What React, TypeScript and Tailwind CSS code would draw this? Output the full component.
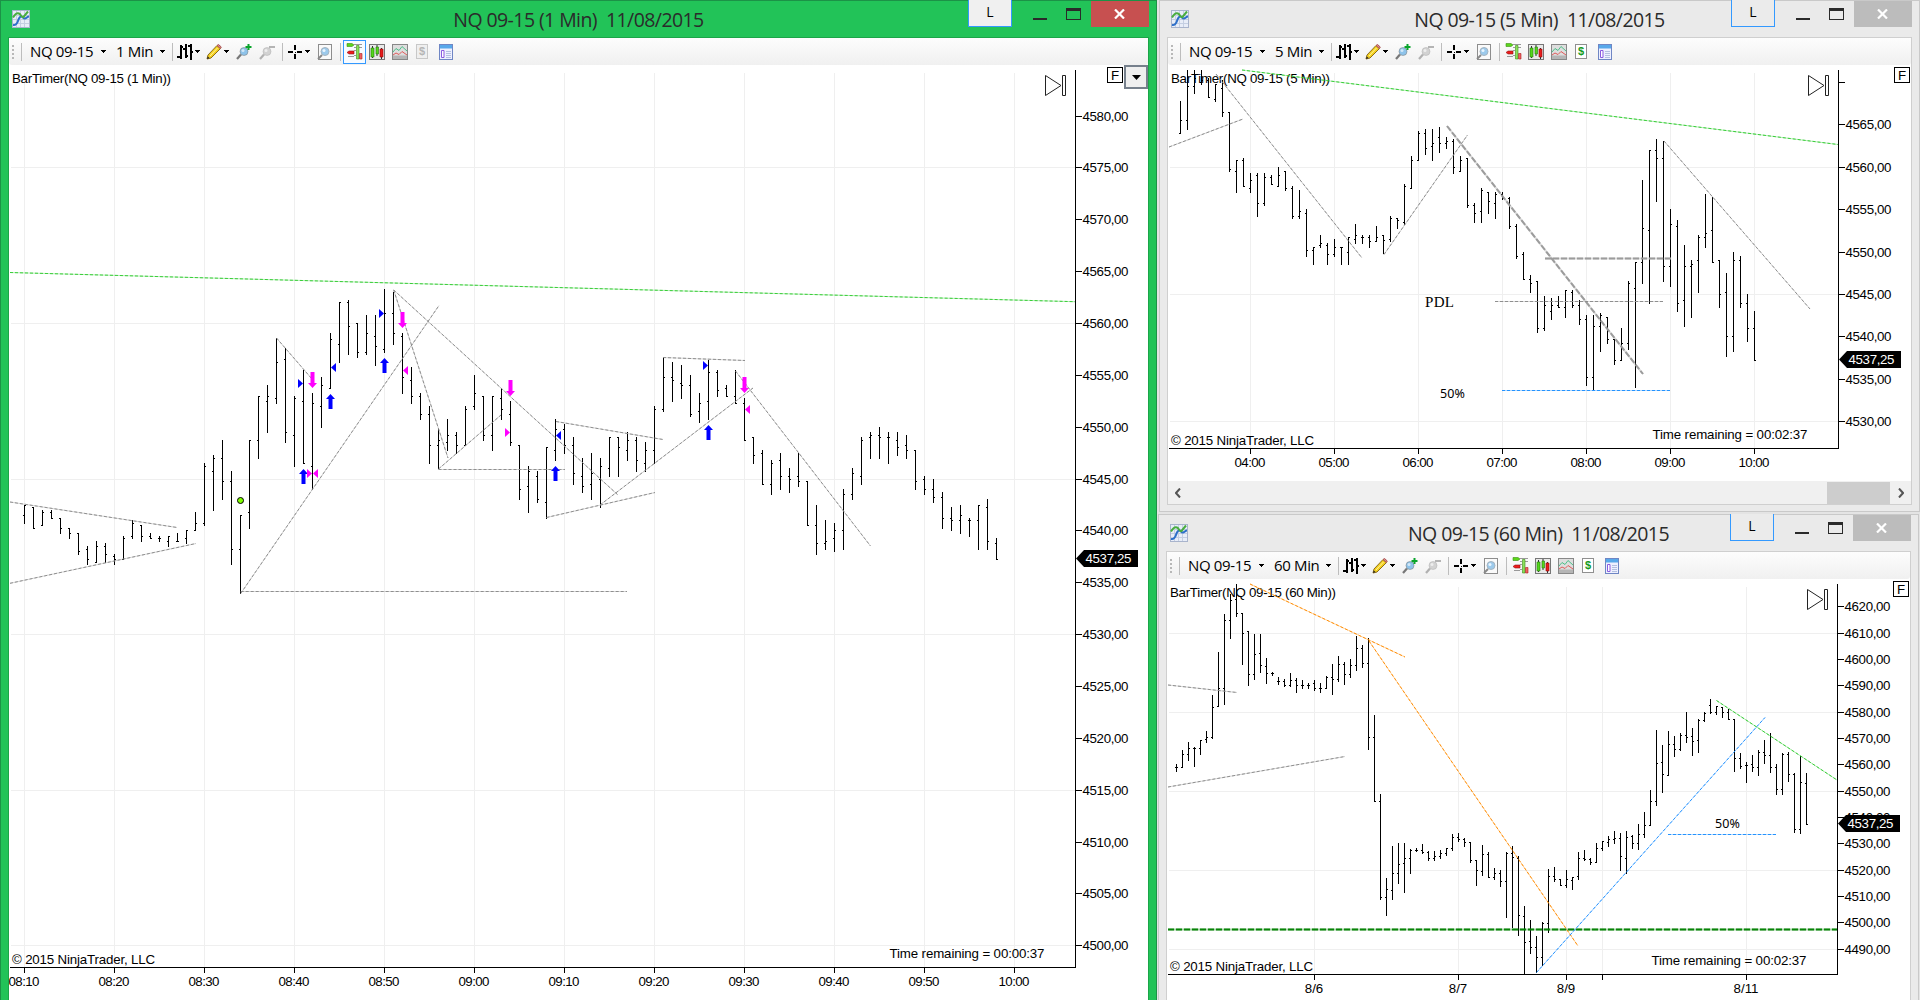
import type { ReactNode } from 'react';
import clsx from 'clsx';

type Bar = [number, number, number, number];
type Line = { from: [number, number]; to: [number, number]; color?: string; dash?: string; width?: number };
type Label = { at: number; text: string };

type ChartProps = {
  view: [number, number, number, number];
  title: string;
  titleWidth: number;
  remaining: string;
  remainingY: number;
  axisX: number;
  axisY: number;
  prices: Label[];
  times: Label[];
  gridY: number[];
  firstBar: number;
  barStep: number;
  bars: Bar[];
  barBase: number;
  lines: Line[];
  priceY: number;
  children?: ReactNode;
};

const GRAY = '#8c8c8c';
const LIME = '#32cd32';
const ORANGE = '#ff8c00';
const BLUE = '#1e90ff';

// open, high, low, close as offsets in thirds of a pixel
const bars1: Bar[] = [
  [767, 735, 792, 736], [742, 741, 806, 805], [796, 750, 797, 757], [757, 750, 776, 775],
  [776, 775, 822, 805], [806, 805, 837, 821], [821, 820, 885, 874], [869, 858, 914, 899],
  [907, 843, 908, 859], [859, 850, 908, 883], [890, 882, 914, 899], [898, 828, 899, 835],
  [830, 781, 836, 790], [797, 796, 846, 829], [829, 820, 837, 835], [835, 828, 846, 835],
  [844, 828, 861, 830], [845, 820, 846, 844], [835, 811, 852, 811], [811, 757, 812, 790],
  [790, 609, 797, 619], [634, 585, 753, 595], [595, 540, 720, 664], [664, 633, 914, 868],
  [868, 766, 1002, 767], [757, 541, 806, 542], [542, 408, 597, 409], [424, 375, 518, 409],
  [415, 234, 431, 307], [298, 265, 549, 517], [526, 408, 621, 415], [424, 330, 612, 610],
  [619, 399, 690, 430], [439, 351, 503, 376], [385, 219, 386, 238], [253, 126, 308, 127],
  [127, 120, 285, 199], [190, 190, 293, 277], [277, 165, 285, 220], [229, 165, 318, 259],
  [268, 87, 278, 160], [160, 96, 254, 220], [229, 219, 402, 352], [361, 321, 431, 409],
  [409, 400, 480, 463], [463, 438, 612, 556], [556, 507, 627, 541], [547, 477, 573, 526],
  [526, 516, 582, 555], [555, 438, 558, 448], [439, 345, 449, 400], [409, 408, 543, 526],
  [526, 408, 573, 409], [415, 384, 480, 448], [463, 423, 558, 547], [556, 555, 720, 688],
  [679, 618, 759, 634], [649, 633, 729, 718], [727, 562, 776, 562], [571, 477, 603, 508],
  [508, 492, 582, 556], [556, 531, 674, 640], [649, 594, 699, 679], [673, 579, 720, 640],
  [658, 594, 744, 619], [625, 532, 651, 533], [533, 532, 651, 562], [571, 516, 603, 541],
  [541, 531, 636, 601], [610, 546, 635, 571], [571, 438, 612, 448], [448, 291, 456, 352],
  [352, 306, 426, 361], [370, 315, 417, 376], [376, 345, 471, 463], [454, 399, 489, 430],
  [424, 300, 480, 337], [337, 330, 411, 391], [385, 375, 411, 409], [409, 330, 432, 430],
  [430, 414, 543, 541], [532, 531, 612, 586], [580, 570, 675, 673], [673, 600, 705, 610],
  [601, 579, 690, 649], [649, 624, 699, 658], [649, 579, 681, 664], [664, 664, 798, 796],
  [796, 735, 885, 850], [850, 780, 870, 844], [835, 789, 876, 811], [811, 687, 870, 703],
  [703, 624, 720, 640], [649, 531, 675, 541], [532, 516, 597, 526], [526, 501, 597, 532],
  [532, 516, 612, 532], [541, 516, 588, 562], [556, 525, 597, 571], [571, 570, 690, 664],
  [658, 648, 705, 688], [688, 657, 729, 712], [712, 696, 807, 775], [775, 741, 813, 781],
  [781, 735, 822, 766], [781, 774, 831, 781], [781, 735, 870, 736], [742, 717, 870, 844],
  [850, 834, 900, 898],
];

const bars5: Bar[] = [
  [220, 123, 221, 181], [181, 30, 210, 79], [79, 30, 102, 54], [66, 30, 75, 60],
  [60, 54, 113, 112], [118, 71, 126, 72], [85, 60, 171, 157], [157, 156, 335, 328],
  [334, 300, 398, 301], [301, 294, 381, 379], [385, 339, 399, 361], [346, 339, 471, 430],
  [430, 339, 437, 352], [352, 345, 375, 373], [379, 321, 381, 346], [334, 333, 392, 385],
  [385, 378, 476, 469], [469, 390, 476, 454], [460, 447, 591, 571], [571, 561, 615, 562],
  [556, 525, 563, 550], [556, 549, 615, 583], [583, 537, 590, 562], [562, 562, 615, 562],
  [577, 531, 615, 532], [538, 492, 551, 526], [532, 525, 551, 532], [532, 525, 563, 544],
  [544, 498, 545, 532], [526, 525, 581, 541], [538, 468, 546, 475], [475, 475, 506, 481],
  [487, 372, 494, 379], [385, 288, 386, 301], [301, 213, 302, 220], [220, 207, 285, 265],
  [259, 207, 302, 250], [232, 201, 278, 250], [250, 231, 266, 244], [244, 238, 342, 322],
  [334, 288, 335, 301], [295, 294, 444, 436], [436, 429, 489, 460], [454, 384, 489, 391],
  [397, 396, 462, 424], [430, 396, 476, 403], [402, 396, 420, 415], [415, 411, 507, 499],
  [499, 492, 597, 589], [583, 576, 659, 658], [657, 645, 699, 670], [664, 663, 819, 805],
  [805, 708, 812, 736], [754, 714, 780, 736], [736, 708, 744, 742], [742, 690, 773, 691],
  [697, 690, 744, 736], [736, 720, 795, 778], [778, 765, 978, 952], [952, 765, 990, 799],
  [799, 759, 876, 766], [772, 771, 852, 838], [838, 837, 915, 901], [901, 804, 903, 850],
  [850, 663, 870, 670], [685, 606, 984, 607], [607, 360, 672, 505], [511, 270, 731, 271],
  [271, 237, 426, 295], [295, 243, 665, 619], [619, 447, 681, 493], [499, 480, 756, 730],
  [721, 555, 801, 619], [619, 600, 774, 613], [601, 525, 699, 532], [532, 402, 563, 520],
  [511, 411, 609, 607], [601, 600, 744, 703], [697, 639, 891, 829], [829, 576, 876, 601],
  [601, 588, 744, 730], [730, 702, 846, 805], [805, 753, 903, 901],
];

const bars60: Bar[] = [
  [592, 582, 606, 592], [592, 540, 593, 552], [552, 516, 573, 535], [536, 531, 591, 535],
  [535, 510, 555, 511], [508, 483, 518, 502], [502, 375, 506, 412], [409, 246, 410, 355],
  [355, 132, 405, 151], [151, 72, 207, 91], [88, 42, 140, 130], [130, 130, 285, 190],
  [184, 183, 348, 313], [313, 192, 330, 253], [250, 192, 308, 286], [290, 264, 341, 310],
  [310, 306, 318, 310], [334, 321, 345, 334], [334, 327, 350, 346], [346, 309, 351, 330],
  [331, 324, 369, 346], [346, 330, 357, 346], [346, 339, 356, 346], [340, 330, 363, 355],
  [355, 339, 369, 355], [355, 318, 357, 322], [322, 282, 375, 328], [328, 258, 335, 283],
  [283, 276, 345, 313], [313, 267, 323, 286], [286, 198, 303, 235], [235, 225, 293, 280],
  [280, 204, 540, 502], [502, 435, 696, 694], [694, 672, 990, 982], [982, 924, 1037, 958],
  [961, 828, 990, 910], [910, 819, 942, 883], [880, 819, 969, 865], [865, 837, 912, 841],
  [841, 834, 846, 841], [841, 822, 851, 847], [847, 844, 872, 865], [865, 843, 873, 859],
  [859, 840, 866, 850], [850, 834, 857, 835], [835, 792, 842, 802], [802, 789, 816, 808],
  [808, 804, 830, 817], [817, 816, 878, 871], [871, 870, 948, 901], [904, 825, 918, 853],
  [853, 847, 924, 922], [922, 894, 929, 910], [910, 900, 951, 934], [934, 846, 1044, 850],
  [850, 828, 1074, 862], [865, 858, 1098, 1036], [1039, 1008, 1212, 1117], [1114, 1050, 1152, 1132],
  [1132, 1098, 1208, 1162], [1162, 1056, 1188, 1060], [1060, 897, 1089, 919], [919, 891, 936, 928],
  [928, 928, 948, 946], [946, 900, 954, 928], [931, 921, 960, 922], [919, 846, 930, 865],
  [865, 840, 873, 868], [868, 865, 885, 877], [877, 819, 879, 835], [835, 813, 843, 814],
  [817, 798, 831, 808], [808, 783, 822, 805], [805, 789, 903, 859], [865, 783, 911, 802],
  [799, 795, 837, 820], [820, 762, 840, 793], [793, 726, 804, 766], [766, 660, 768, 694],
  [694, 480, 708, 580], [577, 525, 669, 613], [616, 483, 618, 523], [523, 498, 561, 538],
  [538, 489, 543, 496], [496, 426, 518, 502], [499, 474, 558, 514], [511, 447, 549, 451],
  [451, 426, 456, 430], [406, 387, 432, 427], [427, 408, 435, 409], [412, 411, 444, 427],
  [427, 417, 450, 448], [448, 447, 606, 565], [565, 549, 597, 589], [586, 576, 639, 586],
  [583, 555, 606, 592], [592, 540, 618, 547], [547, 510, 582, 556], [556, 489, 609, 592],
  [592, 582, 675, 658], [658, 549, 675, 553], [553, 546, 636, 613], [613, 609, 789, 778],
  [778, 558, 792, 637], [640, 609, 765, 763],
];

const lines1: Line[] = [
  { from: [10, 272.5], to: [1075, 301.7], color: LIME },
  { from: [10, 502], to: [177, 527.5] },
  { from: [10, 583.3], to: [196, 543.5] },
  { from: [276.5, 338], to: [312, 379] },
  { from: [240.7, 593.5], to: [439, 305.5] },
  { from: [240.7, 591.5], to: [627, 591.5] },
  { from: [393.7, 290], to: [448, 458] },
  { from: [393.7, 290], to: [618, 495] },
  { from: [438.5, 469], to: [501, 415] },
  { from: [438.5, 469.5], to: [565, 469.5] },
  { from: [556, 421.5], to: [663, 439.5] },
  { from: [546.5, 517.5], to: [655, 492.5] },
  { from: [600, 505], to: [753, 388] },
  { from: [663, 357.5], to: [745, 360.5] },
  { from: [735.5, 371], to: [870.5, 546] },
];

const lines5: Line[] = [
  { from: [1242, 70], to: [1838, 144.5], color: LIME },
  { from: [1169, 147], to: [1243, 119] },
  { from: [1216, 74], to: [1362, 258] },
  { from: [1384, 254.5], to: [1467.5, 135] },
  { from: [1447, 126], to: [1643, 374], color: '#999', width: 2, dash: '6 2' },
  { from: [1545, 258.5], to: [1671, 258.5], color: '#999', width: 2, dash: '6 2' },
  { from: [1495, 301.5], to: [1663, 301.5] },
  { from: [1664, 141], to: [1810, 309] },
  { from: [1502, 390.5], to: [1670, 390.5], color: BLUE },
];

const lines60: Line[] = [
  { from: [1168, 685], to: [1237, 692.5] },
  { from: [1168, 787], to: [1345, 756.5] },
  { from: [1250, 584], to: [1405, 657], color: ORANGE },
  { from: [1369, 641], to: [1578, 946], color: ORANGE },
  { from: [1168, 929.5], to: [1837, 929.5], color: '#008000', width: 2, dash: '6 2' },
  { from: [1536.5, 972.5], to: [1765, 717.5], color: BLUE },
  { from: [1668, 834.5], to: [1776, 834.5], color: BLUE },
  { from: [1716.5, 700.5], to: [1837, 780], color: LIME },
];

const priceLabels = (top: number, step: number, ys: number[]): Label[] =>
  ys.map((at, i) => ({ at, text: `${top - i * step},00` }));

const hourLabels = (first: number, step: number, texts: string[]): Label[] =>
  texts.map((text, i) => ({ at: first + i * step, text }));

const PlotText = ({ x, y, w, fill = '#000', children }: { x: number; y: number; w?: number; fill?: string; children: string }) => (
  <text x={x} y={y} textLength={w} fill={fill} className="font-['Liberation_Sans',sans-serif] text-[13.3px] whitespace-pre">
    {children}
  </text>
);

const Chart = (props: ChartProps) => {
  const { view, axisX, axisY, barBase } = props;
  const [left, top, width, height] = view;
  const gridTop = top + 8;
  const tagY = props.priceY;

  let path = '';
  props.bars.forEach(([o, h, l, c], i) => {
    const x = props.firstBar + i * props.barStep;
    const y1 = barBase + Math.round(h / 3);
    const y2 = Math.min(barBase + Math.round(l / 3), axisY);
    path += `M${x} ${y1}h1V${y2}h-1z`;
    path += `M${x - 1} ${barBase + Math.floor(o / 3)}h1v1h-1z`;
    path += `M${x + 1} ${barBase + Math.floor(c / 3)}h1v1h-1z`;
  });

  return (
    <svg width={width} height={height} viewBox={view.join(' ')} className="block shrink-0 bg-white">
      <g fill="#efefef" shapeRendering="crispEdges">
        {props.times.map((t) => (
          <rect key={t.at} x={t.at} y={gridTop} width={1} height={axisY - gridTop} />
        ))}
        {props.gridY.map((y) => (
          <rect key={y} x={left + 2} y={y} width={axisX - left - 2} height={1} />
        ))}
      </g>

      <PlotText x={left + 3} y={top + 18} w={props.titleWidth}>{props.title}</PlotText>
      <path d={path} fill="#000" shapeRendering="crispEdges" />

      {props.lines.map((line, i) => {
        const [x1, y1] = line.from;
        const [x2, y2] = line.to;
        const color = line.color ?? GRAY;
        return (
          <g key={i} stroke={color} strokeWidth={line.width ?? 1}>
            <line x1={x1} y1={y1} x2={x2} y2={y2} opacity={0.35} />
            <line x1={x1} y1={y1} x2={x2} y2={y2} strokeDasharray={line.dash ?? '3 2'} opacity={0.95} />
          </g>
        );
      })}

      {props.children}

      <g shapeRendering="crispEdges">
        <rect x={axisX} y={top + 5} width={1} height={axisY - top - 4} />
        <rect x={left + 1} y={axisY} width={axisX - left} height={1} />
        {props.prices.map((p) => (
          <rect key={p.at} x={axisX} y={p.at} width={7} height={1} />
        ))}
        {props.times.map((t) => (
          <rect key={t.at} x={t.at} y={axisY} width={1} height={6} />
        ))}
      </g>
      {props.prices.map((p) => (
        <PlotText key={p.at} x={axisX + 7.5} y={p.at + 5} w={p.text ? 46 : undefined}>{p.text}</PlotText>
      ))}
      {props.times.map((t) => (
        <text key={t.at} x={t.at} y={axisY + 19} textAnchor="middle" textLength={t.text.length === 5 ? 31 : undefined} className="font-['Liberation_Sans',sans-serif] text-[13.3px]">
          {t.text}
        </text>
      ))}

      <path d={`M${axisX + 1} ${tagY}l8-8.5h54v17h-54z`} />
      <PlotText x={axisX + 10.5} y={tagY + 4.5} w={46} fill="#fff">4537,25</PlotText>

      <PlotText x={left + 3} y={axisY - 3} w={143}>© 2015 NinjaTrader, LLC</PlotText>
      <PlotText x={axisX - 185.5} y={props.remainingY} w={155}>{`Time remaining = ${props.remaining}`}</PlotText>

      {/* go to last bar */}
      <path
        d={`M${axisX - 29.5} ${top + 10.5}v20l15.5-10zM${axisX - 12.5} ${top + 10.5}h3v20h-3z`}
        fill="#fff"
        stroke="#222"
      />
      <rect x={left + width - (left === 9 ? 40.5 : 16.5)} y={top + 2.5} width={15} height={15} fill="#fff" stroke="#000" />
      <PlotText x={left + width - (left === 9 ? 37 : 13)} y={top + 15}>F</PlotText>
    </svg>
  );
};

type MarkerProps = { x: number; y: number; color: string };

const UpArrow = ({ x, y, color }: MarkerProps) => (
  <path d={`M${x + 0.5} ${y}l4.5 5h-2.5v10h-4v-10h-2.5z`} fill={color} />
);
const DownArrow = ({ x, y, color }: MarkerProps) => (
  <path d={`M${x + 0.5} ${y + 16}l4.5-5h-2.5v-11h-4v11h-2.5z`} fill={color} />
);
const PointRight = ({ x, y, color }: MarkerProps) => <path d={`M${x} ${y}l-5-4.5v9z`} fill={color} />;
const PointLeft = ({ x, y, color }: MarkerProps) => <path d={`M${x} ${y}l5-4.5v9z`} fill={color} />;

const Trades = () => {
  const buy = '#0000ff';
  const sell = '#ff00ff';
  return (
    <g>
      <DownArrow x={312} y={372} color={sell} />
      <DownArrow x={402} y={312} color={sell} />
      <DownArrow x={510} y={380} color={sell} />
      <DownArrow x={744} y={377} color={sell} />
      <UpArrow x={303} y={469} color={buy} />
      <UpArrow x={330} y={394} color={buy} />
      <UpArrow x={384} y={358} color={buy} />
      <UpArrow x={555} y={466} color={buy} />
      <UpArrow x={708} y={425} color={buy} />
      <PointRight x={303} y={383.5} color={buy} />
      <PointRight x={384} y={313.5} color={buy} />
      <PointRight x={708} y={365.5} color={buy} />
      <PointRight x={312} y={473.5} color={sell} />
      <PointRight x={510} y={432.5} color={sell} />
      <PointLeft x={331} y={367.5} color={buy} />
      <PointLeft x={556} y={435.5} color={buy} />
      <PointLeft x={313} y={473.5} color={sell} />
      <PointLeft x={403} y={370.5} color={sell} />
      <PointLeft x={745} y={409.5} color={sell} />
      <circle cx={240.5} cy={500.5} r={3} fill="#7fff00" stroke="#000" />
    </g>
  );
};

const AppIcon = () => (
  <svg width="18" height="18" viewBox="0 0 18 18" className="mt-[10px] ml-[12px]">
    <rect x="0.5" y="0.5" width="17" height="17" fill="#e8edf8" stroke="#a9b4cc" />
    <path d="M4.5 1v16M8.5 1v16M12.5 1v16M1 5.5h16M1 9.5h16M1 13.5h16" stroke="#c5cfe2" />
    <path d="M1 15c3 .5 4-1 5-4s1.500-5 3.500-4.500S11 9 13 8.500s2-2 4-2" fill="none" stroke="#2d6fc9" strokeWidth="2" />
    <path d="M1 7.500c2-3.500 4-5 6-4 2 .8 2.500 4.500 4.500 3.500l4.500-5.500" fill="none" stroke="#49ad3f" strokeWidth="2" />
  </svg>
);

const Caret = ({ className }: { className: string }) => (
  <svg width="5" height="3" viewBox="0 0 5 3" className={clsx('shrink-0', className)} shapeRendering="crispEdges">
    <path d="M0 0h5L2.500 3z" />
  </svg>
);

const Separator = ({ className }: { className: string }) => (
  <span className={clsx('h-[18px] w-px shrink-0 bg-[#bdbdbd]', className)} />
);

const Lens = ({ tone, rim }: { tone: string; rim: string }) => (
  <>
    <path d="M5 10.500l-4 4.500" stroke={rim} strokeWidth="2.200" />
    <circle cx="8" cy="7.500" r="4" fill={tone} stroke={rim} strokeOpacity="0.5" />
    <circle cx="7" cy="6.500" r="1.500" fill="#fff" opacity="0.600" />
  </>
);

const Toolbar = ({ period, active }: { period: string; active?: boolean }) => (
  <div className="flex h-[27px] shrink-0 items-center overflow-hidden rounded-b-[3px] bg-linear-to-b from-[#fdfdfd] to-[#f0f0f0] font-['Open_Sans',sans-serif] text-[15px] tracking-[-0.35px] text-black">
    <svg width="2" height="14" viewBox="0 0 2 14" className="ml-[3px] shrink-0">
      <path d="M0 0h2v2H0zM0 4h2v2H0zM0 8h2v2H0zM0 12h2v2H0z" fill="#b8b8b8" />
    </svg>
    <Separator className="ml-[7px]" />
    <span className="ml-[8px] w-[64px] shrink-0 whitespace-nowrap">NQ 09-15</span>
    <Caret className="ml-[7px]" />
    <span className={clsx('ml-[10px] shrink-0 whitespace-nowrap', period.startsWith('60') ? 'w-[45px]' : 'w-[37px]')}>{period}</span>
    <Caret className="ml-[7px]" />
    <Separator className="ml-[7px]" />
    <svg width="16" height="16" viewBox="0 0 16 16" className="ml-[4px] shrink-0" shapeRendering="crispEdges">
      <path d="M3 1h2v14H3zM0 12h3v2H0zM5 2h1v2H5zM8 0h2v14H8zM6 4h2v2H6zM10 11h1v2h-1zM13 0h2v16h-2zM11 1h2v2h-2zM15 7h1v2h-1z" />
    </svg>
    <Caret className="ml-[2px]" />
    <svg width="16" height="16" viewBox="0 0 16 16" className="ml-[6px] shrink-0">
      <path d="M1 15l1-4L11 1.500l3.500 3L5 14z" fill="#f5d21f" stroke="#8a6b1c" />
      <path d="M11 1.500l1.500-1 2.800 2.500-1 1.500z" fill="#e28a8a" stroke="#a85454" />
      <path d="M4 12l7.500-8" stroke="#fff3a0" />
      <path d="M1 15l.8-2.500L3.500 14z" fill="#222" />
    </svg>
    <Caret className="ml-[2px]" />
    <svg width="16" height="16" viewBox="0 0 16 16" className="ml-[7px] shrink-0">
      <Lens tone="#8ec3ea" rim="#777" />
      <path d="M12.500 0v6M9.500 3h6" stroke="#0aa52c" strokeWidth="2" />
    </svg>
    <svg width="16" height="16" viewBox="0 0 16 16" className="ml-[7px] shrink-0">
      <Lens tone="#d2d2d2" rim="#b0b0b0" />
      <path d="M10 3h6" stroke="#b4b4b4" strokeWidth="2" />
    </svg>
    <Separator className="ml-[7px]" />
    <svg width="15" height="14" viewBox="0 0 15 14" className="ml-[5px] shrink-0" shapeRendering="crispEdges">
      <path d="M6 0h2v5H6zM6 9h2v5H6zM0 6h5v2H0zM9 6h5v2H9zM6.500 6.500h1v1h-1z" />
    </svg>
    <Caret className="ml-[2px]" />
    <svg width="16" height="16" viewBox="0 0 16 16" className="ml-[7px] shrink-0">
      <rect x="1.500" y="0.500" width="13" height="15" fill="#fafafa" stroke="#8d8d8d" />
      <path d="M5 11l-4 4" stroke="#888" strokeWidth="2" />
      <circle cx="8" cy="7.500" r="4" fill="#9ccaec" stroke="#a5b4c0" />
      <circle cx="7" cy="6.500" r="1.500" fill="#e8f5ff" />
    </svg>
    <Separator className="ml-[7px]" />
    <span
      className={clsx(
        'ml-[2px] flex h-[24px] w-[23px] shrink-0 items-center justify-center border',
        active ? 'border-[#3399ff] bg-[#f7fbff]' : 'border-transparent',
      )}
    >
      <svg width="17" height="17" viewBox="0 0 17 17">
        <path d="M8 1.500h8M8 4.500h2M13 4.500h3M8 7.500h2M8 12.500h2M2 13.500h6" stroke="#999" />
        <path d="M1 0.500h5l2 1.500-2 1.500H1z" fill="#5cd61b" stroke="#3c8f14" strokeWidth="0.600" />
        <path d="M10.500 2.500h2.500v13.500h-2.500z" fill="#8be05c" stroke="#3c8f14" strokeWidth="0.600" />
        <path d="M8 8H3L1 9.500 3 11h5z" fill="#ee1c1c" stroke="#8f1414" strokeWidth="0.600" />
        <path d="M13.500 10.500h2.500v5.500h-2.500z" fill="#f06060" stroke="#a82020" strokeWidth="0.600" />
      </svg>
    </span>
    <svg width="16" height="16" viewBox="0 0 16 16" className="ml-[3px] shrink-0">
      <rect x="0.500" y="0.500" width="15" height="15" fill="#e9e9e9" stroke="#777" />
      <path d="M3.500 2v12M8 1v11M12.500 4v11" stroke="#333" />
      <path d="M2 4h3v9H2zM7 3h2.500v7H7z" fill="#55d61c" stroke="#23780b" strokeWidth="0.600" />
      <path d="M11 5h3v8h-3z" fill="#e81c1c" stroke="#8d0b0b" strokeWidth="0.600" />
    </svg>
    <svg width="16" height="16" viewBox="0 0 16 16" className="ml-[7px] shrink-0">
      <rect x="0.500" y="0.500" width="15" height="15" fill="#dedede" stroke="#888" />
      <path d="M1 11.500h14V15H1z" fill="#b5b5b5" />
      <path d="M1 8l3-3.500 3 2 3-4 5 4.500" fill="none" stroke="#4fc08a" />
      <path d="M1 11l3-2 3 1.500 3-3L15 11" fill="none" stroke="#e05a5a" />
    </svg>
    <span
      className={clsx(
        "ml-[8px] flex h-[15px] w-[12px] shrink-0 items-center justify-center border font-['Liberation_Sans',sans-serif] text-[11px] leading-none font-bold tracking-normal",
        active ? 'border-[#c8c8c8] bg-[#efefef] text-[#b5b5b5]' : 'border-[#8f8f8f] bg-white text-[#159a1b]',
      )}
    >
      $
    </span>
    <svg width="14" height="16" viewBox="0 0 14 16" className="ml-[11px] shrink-0">
      <rect x="0.500" y="0.500" width="13" height="15" fill="#eef0ff" stroke="#6f86c4" />
      <path d="M1 1h12v3.500H1z" fill="#58a8ea" />
      <path d="M2.500 6.500h2.500v7H2.500z" fill="#fff" stroke="#8a5be0" />
      <path d="M7 7.500h5M7 9.500h5M7 11.500h5M7 13.500h5" stroke="#b3c0e0" />
    </svg>
  </div>
);

const ChartWindow = ({ title, period, active, className, children }: {
  title: string;
  period: string;
  active?: boolean;
  className: string;
  children: ReactNode;
}) => (
  <section
    className={clsx(
      'flex shrink-0 flex-col overflow-hidden',
      active ? 'bg-[#22c358] shadow-[inset_1px_1px_0_#1c9247,inset_-1px_0_0_#1c9247]' : 'bg-[#eaeaea] shadow-[inset_0_0_0_1px_#c9c9c9]',
      className,
    )}
  >
    <header className="grid h-[37px] shrink-0 grid-cols-[189px_1fr_189px]">
      <AppIcon />
      <h1 className="pt-[6px] text-center font-['Open_Sans',sans-serif] text-[19.5px] leading-[28px] tracking-[-0.58px] whitespace-pre text-[#2b2b2b]">
        {title}
      </h1>
      <div className="flex items-start">
        <span
          className={clsx(
            "flex h-[27px] w-[44px] items-center justify-center border border-t-0 border-[#3399ff] pb-[4px] font-['Open_Sans',sans-serif] text-[14px] text-black",
            active ? 'bg-[#f0f0f0]' : 'bg-[#ebebeb]',
          )}
        >
          L
        </span>
        <span className="mt-[18px] ml-[21px] h-[2px] w-[14px] bg-[#2a2a2a]" />
        <span className="mt-[8px] ml-[19px] h-[12px] w-[15px] border border-t-[3px] border-[#2a2a2a]" />
        <span className={clsx('mt-px ml-[10px] flex h-[26px] w-[58px] items-center justify-center', active ? 'bg-[#c75050]' : 'bg-[#bcbcbc]')}>
          <svg width="11" height="10" viewBox="0 0 11 10" className="mr-[2px]">
            <path d="M1 0.500l9 9M10 0.500l-9 9" stroke="#fff" strokeWidth="2.200" />
          </svg>
        </span>
      </div>
    </header>
    <div
      className={clsx(
        'mx-[8px] flex min-h-0 flex-col border-x border-t bg-white',
        active ? 'flex-1 border-[#1ba548]' : 'border-b border-[#cfcfcf]',
      )}
    >
      <Toolbar period={period} active={active} />
      {children}
    </div>
  </section>
);

const ScrollBar = () => (
  <div className="flex h-[23px] shrink-0 items-center justify-between bg-[#f0f0f0] px-[7px]">
    <svg width="6" height="10" viewBox="0 0 6 10">
      <path d="M5 0.500L1 5l4 4.500" fill="none" stroke="#555" strokeWidth="2" />
    </svg>
    <div className="flex h-full items-center gap-[8px]">
      <span className="h-[22px] w-[63px] bg-[#cdcdcd]" />
      <svg width="6" height="10" viewBox="0 0 6 10">
        <path d="M1 0.500L5 5 1 9.500" fill="none" stroke="#555" strokeWidth="2" />
      </svg>
    </div>
  </div>
);

export default function App() {
  return (
    <main className="flex h-[1000px] w-[1920px] overflow-hidden bg-[#e4e4e4]">
      <ChartWindow title={'NQ 09-15 (1 Min)  11/08/2015'} period="1 Min" active className="h-[1000px] w-[1157px]">
        <div className="relative">
          <Chart
            view={[9, 65, 1139, 935]}
            title="BarTimer(NQ 09-15 (1 Min))"
            titleWidth={159}
            remaining="00:00:37"
            remainingY={958}
            axisX={1075}
            axisY={967}
            prices={priceLabels(4580, 5, [116, 167, 219, 271, 323, 375, 427, 479, 530, 582, 634, 686, 738, 790, 842, 893, 945])}
            times={hourLabels(24, 90, ['08:10', '08:20', '08:30', '08:40', '08:50', '09:00', '09:10', '09:20', '09:30', '09:40', '09:50', '10:00'])}
            gridY={[167, 323, 479, 634, 790, 945]}
            firstBar={24}
            barStep={9}
            bars={bars1}
            barBase={260}
            lines={lines1}
            priceY={558.5}
          >
            <Trades />
          </Chart>
          <span className="absolute top-0 right-0 flex h-[24px] w-[24px] items-center justify-center border-2 border-[#76808c] bg-[#efefef]">
            <svg width="9" height="5" viewBox="0 0 9 5">
              <path d="M0 0h9L4.500 5z" />
            </svg>
          </span>
        </div>
      </ChartWindow>

      <div className="flex flex-col gap-[2px] pl-px">
        <ChartWindow title={'NQ 09-15 (5 Min)  11/08/2015'} period="5 Min" className="ml-px h-[512px] w-[761px]">
          <Chart
            view={[1168, 65, 743, 416]}
            title="BarTimer(NQ 09-15 (5 Min))"
            titleWidth={159}
            remaining="00:02:37"
            remainingY={439}
            axisX={1838}
            axisY={448}
            prices={[{ at: 82, text: '' }, ...priceLabels(4565, 5, [124, 167, 209, 252, 294, 336, 379, 421])]}
            times={hourLabels(1250, 84, ['04:00', '05:00', '06:00', '07:00', '08:00', '09:00', '10:00'])}
            gridY={[167, 294, 421]}
            firstBar={1180}
            barStep={7}
            bars={bars5}
            barBase={60}
            lines={lines5}
            priceY={359.5}
          >
            <text x={1425} y={307} textLength={29} className="font-['Liberation_Serif',serif] text-[15px]">PDL</text>
            <text x={1440} y={398} textLength={25} className="font-['Noto_Sans',sans-serif] text-[12.5px]">50%</text>
          </Chart>
          <ScrollBar />
        </ChartWindow>

        <ChartWindow title={'NQ 09-15 (60 Min)  11/08/2015'} period="60 Min" className="h-[500px] w-[761px]">
          <Chart
            view={[1167, 579, 743, 421]}
            title="BarTimer(NQ 09-15 (60 Min))"
            titleWidth={166}
            remaining="00:02:37"
            remainingY={965}
            axisX={1837}
            axisY={974}
            prices={priceLabels(4620, 10, [606, 633, 659, 685, 712, 738, 764, 791, 817, 843, 870, 896, 922, 949])}
            times={[
              { at: 1314, text: '8/6' },
              { at: 1458, text: '8/7' },
              { at: 1566, text: '8/9' },
              { at: 1602, text: '' },
              { at: 1746, text: '8/11' },
            ]}
            gridY={[633, 712, 791, 870, 949]}
            firstBar={1176}
            barStep={6}
            bars={bars60}
            barBase={570}
            lines={lines60}
            priceY={823.5}
          >
            <text x={1715} y={828} textLength={25} className="font-['Noto_Sans',sans-serif] text-[12.5px]">50%</text>
          </Chart>
        </ChartWindow>
      </div>
    </main>
  );
}
